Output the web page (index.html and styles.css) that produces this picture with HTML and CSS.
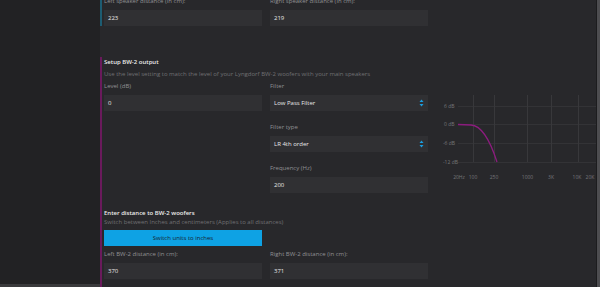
FILE: index.html
```html
<!DOCTYPE html>
<html lang="en">
<head>
    <meta charset="UTF-8">
    <meta name="viewport" content="width=device-width, initial-scale=1.0">
    <title>BW-2 Setup</title>
    <link rel="stylesheet" href="styles.css">
</head>
<body>
    <div class="sidebar">
        <div class="sidebar-edge"></div>
    </div>

    <div class="main">
        <div class="content">
            <!-- speaker distances (scrolled partly out of view) -->
            <div class="section section-speakers">
                <div class="row">
                    <div class="field">
                        <label class="field-label">Left speaker distance (in cm):</label>
                        <div class="input">223</div>
                    </div>
                    <div class="field">
                        <label class="field-label">Right speaker distance (in cm):</label>
                        <div class="input">219</div>
                    </div>
                </div>
            </div>

            <div class="section section-woofers">
                <div class="section-title">Setup BW-2 output</div>
                <div class="section-desc">Use the level setting to match the level of your Lyngdorf BW-2 woofers with your main speakers</div>

                <div class="output-grid">
                    <div class="col">
                        <div class="field">
                            <label class="field-label">Level (dB)</label>
                            <div class="input">0</div>
                        </div>
                    </div>

                    <div class="col">
                        <div class="field">
                            <label class="field-label">Filter</label>
                            <div class="input select">
                                <span>Low Pass Filter</span>
                                <svg class="select-arrow" width="5" height="8" viewBox="0 0 5 8">
                                    <path d="M2.5 0.5 L4.5 3 L0.5 3 Z" fill="#1b9fe2"/>
                                    <path d="M0.5 5 L4.5 5 L2.5 7.5 Z" fill="#1b9fe2"/>
                                </svg>
                            </div>
                        </div>
                        <div class="field">
                            <label class="field-label">Filter type</label>
                            <div class="input select">
                                <span>LR 4th order</span>
                                <svg class="select-arrow" width="5" height="8" viewBox="0 0 5 8">
                                    <path d="M2.5 0.5 L4.5 3 L0.5 3 Z" fill="#1b9fe2"/>
                                    <path d="M0.5 5 L4.5 5 L2.5 7.5 Z" fill="#1b9fe2"/>
                                </svg>
                            </div>
                        </div>
                        <div class="field field-last">
                            <label class="field-label">Frequency (Hz)</label>
                            <div class="input">200</div>
                        </div>
                    </div>

                    <div class="col">
                        <svg class="response-chart" width="160" height="92" viewBox="0 0 160 92">
                            <g stroke="#333336" stroke-width="1">
                                <line x1="22" y1="15.5" x2="160" y2="15.5"/>
                                <line x1="22" y1="33.5" x2="160" y2="33.5"/>
                                <line x1="22" y1="52.5" x2="160" y2="52.5"/>
                                <line x1="22" y1="71.5" x2="160" y2="71.5"/>
                            </g>
                            <g stroke="#38383b" stroke-width="1">
                                <line x1="37.5" y1="4" x2="37.5" y2="71"/>
                                <line x1="58.5" y1="4" x2="58.5" y2="71"/>
                                <line x1="91.5" y1="4" x2="91.5" y2="71"/>
                                <line x1="115.5" y1="4" x2="115.5" y2="71"/>
                                <line x1="142.5" y1="4" x2="142.5" y2="71"/>
                            </g>
                            <g class="chart-label">
                                <text x="8" y="17">6 dB</text>
                                <text x="8" y="35">0 dB</text>
                                <text x="7" y="54">-6 dB</text>
                                <text x="7" y="73">-12 dB</text>
                            </g>
                            <g class="chart-label" text-anchor="middle">
                                <text x="23" y="88">20Hz</text>
                                <text x="37" y="88">100</text>
                                <text x="58" y="88">250</text>
                                <text x="91.5" y="88">1000</text>
                                <text x="115" y="88">3K</text>
                                <text x="141" y="88">10K</text>
                                <text x="154" y="88">20K</text>
                            </g>
                            <path d="M22 33.5 L35 34 C45 34.5 53 46 61 71" fill="none" stroke="#8c1c7e" stroke-width="1.3"/>
                        </svg>
                    </div>
                </div>

                <div class="subsection">
                    <div class="subsection-title">Enter distance to BW-2 woofers</div>
                    <div class="subsection-desc">Switch between Inches and centimeters (Applies to all distances)</div>
                    <button class="btn" type="button">Switch units to inches</button>
                    <div class="row">
                        <div class="field">
                            <label class="field-label">Left BW-2 distance (in cm):</label>
                            <div class="input">370</div>
                        </div>
                        <div class="field">
                            <label class="field-label">Right BW-2 distance (in cm):</label>
                            <div class="input">371</div>
                        </div>
                    </div>
                </div>
            </div>
        </div>
        <div class="scrollbar"></div>
    </div>
</body>
</html>
```

FILE: styles.css
```css
body { margin: 0; height: 287px; overflow: hidden; display: flex; background: #222224; font-family: "Open Sans", sans-serif; font-size: 6px; }
.sidebar { width: 100px; flex: none; display: flex; flex-direction: column; justify-content: flex-end; }
.sidebar-edge { height: 3px; background: #3a3a3c; }
.main { flex: 1; display: flex; background: #28282b; }
.content { flex: 1; }
.scrollbar { width: 3px; border-left: 1px solid #1c1c1e; background: #4d4d50; }

.section { border-left: 2px solid transparent; padding-left: 2px; }
.section-speakers { border-color: #1d5c72; margin-top: -4px; }
.section-woofers { border-color: #6a1a5c; margin-top: 31px; padding-bottom: 20px; }

.section-title { color: #ececec; font-weight: 600; line-height: 10px; margin-bottom: 2px; }
.section-desc { color: #707073; line-height: 10px; margin-bottom: 2px; }

.row { display: flex; gap: 8px; }
.row .field { width: 158px; }
.output-grid { display: grid; grid-template-columns: 158px 158px 160px; column-gap: 8px; }

.field { margin-bottom: 11px; }
.row .field, .field-last { margin-bottom: 0; }
.field-label { display: block; line-height: 10px; margin-bottom: 4px; color: #919194; }
.input { height: 16px; padding: 0 4px; display: flex; align-items: center; background: #303033; color: #e8e8e8; }
.select { justify-content: space-between; }
.select-arrow { margin-right: 0; }

.response-chart { display: block; margin-top: 10px; }
.chart-label { fill: #77777a; font-family: "Open Sans", sans-serif; font-size: 5px; }

.subsection { margin-top: 16px; }
.subsection-title { color: #ececec; font-weight: 600; line-height: 9px; }
.subsection-desc { color: #707073; line-height: 9px; margin-bottom: 3px; }
.btn { display: block; width: 158px; height: 16px; margin-bottom: 3px; padding: 0; border: none; background: #0ea2e4; color: #16232e; font-family: "Open Sans", sans-serif; font-size: 6px; cursor: pointer; }
```
